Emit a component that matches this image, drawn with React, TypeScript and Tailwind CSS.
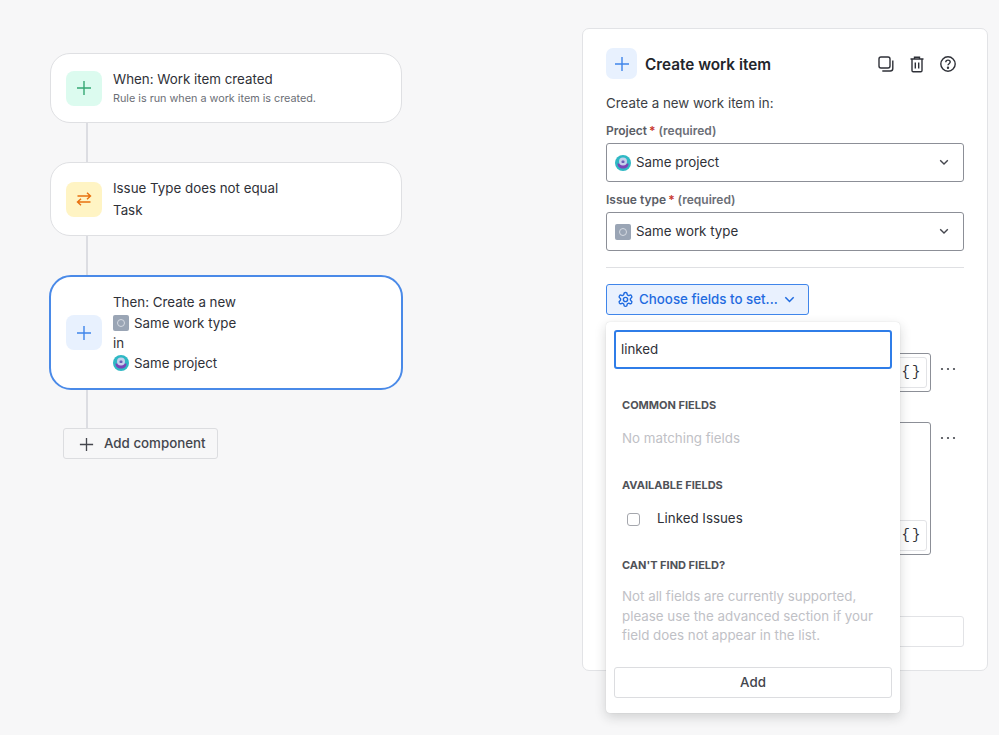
import React from "react";

const Plus = ({ c, s = 18 }: { c: string; s?: number }) => (
  <svg width={s} height={s} viewBox="0 0 18 18" fill="none" stroke={c} strokeWidth="1.4">
    <path d="M9 2v14M2 9h14" />
  </svg>
);

const ProjectIcon = () => (
  <svg width="16" height="16" viewBox="0 0 16 16" className="shrink-0">
    <circle cx="8" cy="8" r="8" fill="#2fb8c4" />
    <path d="M2.500 8.500h11c0 3.200-2.200 5-5.500 5s-5.500-1.800-5.500-5z" fill="#7a45b8" />
    <circle cx="8" cy="6.500" r="4" fill="#c5d0ec" />
    <rect x="6.600" y="5.600" width="2.800" height="2.400" rx="0.600" fill="#6a5fb8" />
  </svg>
);

const TypeIcon = () => (
  <span className="w-4 h-4 shrink-0 rounded-[2px] bg-[#9aa5b5] flex items-center justify-center">
    <span className="w-[8px] h-[8px] rounded-full border border-[#d5dae2]" />
  </span>
);

const Chevron = ({ c = "#44464d", w = 10 }: { c?: string; w?: number }) => (
  <svg width={w} height={(w * 7) / 10} viewBox="0 0 10 7" fill="none" stroke={c} strokeWidth="1.4">
    <path d="M1.200 1.200 5 5l3.800-3.800" />
  </svg>
);

const Connector = ({ h }: { h: string }) => <div className={`ml-[36px] w-[2px] bg-[#dcdde2] ${h}`} />;

const Select = ({ icon, text }: { icon: React.ReactNode; text: string }) => (
  <div className="h-[39px] border border-[#8c8f97] rounded-[3px] bg-white flex items-center pl-[8px] pr-[14px] gap-[5px] text-[13.330px] text-[#2f3138]">
    {icon}
    <span className="flex-1">{text}</span>
    <Chevron />
  </div>
);

const Label = ({ text }: { text: string }) => (
  <div className="flex text-[12px] leading-[16px] font-semibold text-[#5a5d66]">
    <span>{text}</span>
    <span className="ml-[2px] text-[#c9372c]">*</span>
    <span className="ml-[3px] text-[#6b6e76]">(required)</span>
  </div>
);

const Heading = ({ text }: { text: string }) => (
  <div className="text-[11px] leading-[16px] font-bold text-[#505258]">{text}</div>
);

const Braces = () => (
  <div className="w-[32px] h-[31px] border border-[#e2e3e6] rounded-[3px] bg-white flex items-center justify-center text-[14px] tracking-[2px] pl-[2px] text-[#2f3138] font-['Liberation_Mono',monospace]">
    {"{}"}
  </div>
);

const Dots = () => (
  <svg width="16" height="4" viewBox="0 0 16 4" fill="#44464d">
    <circle cx="2" cy="2" r="1.100" />
    <circle cx="8" cy="2" r="1.100" />
    <circle cx="14" cy="2" r="1.100" />
  </svg>
);

export default function App() {
  return (
    <div className="relative w-[999px] h-[735px] overflow-hidden bg-[#f7f7f8] flex items-start font-['Inter',sans-serif]">
      <div className="w-[352px] ml-[50px] mt-[53px] flex flex-col shrink-0">
        <div className="h-[70px] rounded-[20px] border border-[#dfe0e3] bg-white flex items-center pl-[15px] gap-[11px]">
          <div className="w-[36px] h-[35px] rounded-[8px] bg-[#dcfbef] flex items-center justify-center">
            <Plus c="#35a874" />
          </div>
          <div className="-mt-[1px]">
            <div className="text-[13.330px] leading-[20px] text-[#2f3138]">When: Work item created</div>
            <div className="text-[10.800px] leading-[16px] text-[#6b6e76] mt-[2px]">Rule is run when a work item is created.</div>
          </div>
        </div>
        <Connector h="h-[40px]" />
        <div className="h-[74px] -mt-px rounded-[20px] border border-[#dfe0e3] bg-white flex items-center pl-[15px] gap-[11px]">
          <div className="w-[36px] h-[35px] rounded-[8px] bg-[#fff4c4] flex items-center justify-center">
            <svg width="16" height="16" viewBox="0 0 16 16" fill="none" stroke="#e8700f" strokeWidth="1.400">
              <path d="M1.500 5h13M11 1.800 14.500 5 11 8.200M14.500 11h-13M5 7.800 1.500 11 5 14.200" />
            </svg>
          </div>
          <div className="text-[13.330px] leading-[21.500px] pt-[1px] text-[#2f3138]">
            <div>Issue Type does not equal</div>
            <div>Task</div>
          </div>
        </div>
        <Connector h="h-[39px]" />
        <div className="h-[115px] -mx-px rounded-[22px] border-2 border-[#4a8ae8] bg-white flex items-center pl-[15px] gap-[11px]">
          <div className="w-[36px] h-[35px] rounded-[8px] bg-[#e8f1fe] flex items-center justify-center">
            <Plus c="#3f85ea" />
          </div>
          <div className="text-[13.330px] text-[#2f3138] leading-[20px] flex flex-col">
            <div>Then: Create a new</div>
            <div className="flex items-center gap-[5px] mt-[1px]"><TypeIcon />Same work type</div>
            <div>in</div>
            <div className="flex items-center gap-[5px]"><ProjectIcon />Same project</div>
          </div>
        </div>
        <Connector h="h-[38px]" />
        <div className="ml-[13px] w-[155px] h-[31px] pt-[1px] rounded-[3px] border border-[#dcdde0] bg-[#f7f7f8] flex items-center pl-[14px] gap-[9px] text-[13.330px] font-medium text-[#44464d]">
          <Plus c="#44464d" s={17} />
          Add component
        </div>
      </div>

      <div className="ml-[180px] mt-[28px] w-[406px] h-[643px] shrink-0 rounded-[7px] border border-[#e2e3e6] bg-white pt-[19px] px-[23px]">
        <div className="flex items-center h-[31px]">
          <div className="w-[31px] h-[31px] rounded-[7px] bg-[#e8f1fe] flex items-center justify-center">
            <Plus c="#3f85ea" />
          </div>
          <div className="ml-[8px] flex-1 pt-[3px] text-[15.300px] font-semibold text-[#23252b]">Create work item</div>
          <div className="flex items-center gap-[14px] mr-[7px] text-[#2f3138]">
            <svg width="18" height="18" viewBox="0 0 18 18" fill="none" stroke="currentColor" strokeWidth="1.400">
              <rect x="2" y="2" width="11" height="11" rx="2" />
              <path d="M15.800 5.500v8a2.500 2.500 0 0 1-2.500 2.500h-8" />
            </svg>
            <svg width="16" height="18" viewBox="0 0 16 18" fill="none" stroke="currentColor" strokeWidth="1.400">
              <path d="M1.500 4h13M5.500 4V2.200h5V4M3 4v11.500a1.200 1.200 0 0 0 1.200 1.200h7.600a1.200 1.200 0 0 0 1.200-1.200V4M6.300 7.500v6M9.700 7.500v6" />
            </svg>
            <svg width="18" height="18" viewBox="0 0 18 18" fill="none" stroke="currentColor" strokeWidth="1.400">
              <circle cx="9" cy="9" r="7.200" />
              <path d="M6.800 7.200c0-1.300 1-2.100 2.200-2.100s2.200.8 2.200 2c0 1.600-2.200 1.600-2.200 3.200" />
              <circle cx="9" cy="12.800" r="0.500" fill="currentColor" />
            </svg>
          </div>
        </div>
        <div className="mt-[14px] text-[13.330px] leading-[20px] text-[#3d3f46]">Create a new work item in:</div>
        <div className="mt-[10px]"><Label text="Project" /></div>
        <div className="mt-[4px]"><Select icon={<ProjectIcon />} text="Same project" /></div>
        <div className="mt-[10px]"><Label text="Issue type" /></div>
        <div className="mt-[4px]"><Select icon={<TypeIcon />} text="Same work type" /></div>
        <div className="mt-[16px] h-px bg-[#dfe0e3]" />
        <div className="mt-[16px] w-[203px] h-[31px] rounded-[3px] border border-[#3f85ea] bg-[#e9f1fe] flex items-center pl-[10px] gap-[5px] text-[13.330px] font-medium text-[#1f6be0]">
          <svg width="17" height="17" viewBox="0 0 24 24" fill="none" stroke="currentColor" strokeWidth="2">
            <path d="M12.200 2h-.4a2 2 0 0 0-2 2v.2a2 2 0 0 1-1 1.700l-.4.200a2 2 0 0 1-2 0l-.2-.1a2 2 0 0 0-2.700.7l-.2.4a2 2 0 0 0 .7 2.700l.2.1a2 2 0 0 1 1 1.700v.5a2 2 0 0 1-1 1.700l-.2.1a2 2 0 0 0-.7 2.700l.2.4a2 2 0 0 0 2.700.7l.2-.1a2 2 0 0 1 2 0l.4.2a2 2 0 0 1 1 1.700v.2a2 2 0 0 0 2 2h.4a2 2 0 0 0 2-2v-.2a2 2 0 0 1 1-1.700l.4-.2a2 2 0 0 1 2 0l.2.1a2 2 0 0 0 2.700-.7l.2-.4a2 2 0 0 0-.7-2.700l-.2-.1a2 2 0 0 1-1-1.700v-.5a2 2 0 0 1 1-1.700l.2-.1a2 2 0 0 0 .7-2.700l-.2-.4a2 2 0 0 0-2.700-.7l-.2.1a2 2 0 0 1-2 0l-.4-.2a2 2 0 0 1-1-1.700V4a2 2 0 0 0-2-2z" />
            <circle cx="12" cy="12" r="3" />
          </svg>
          <span>Choose fields to set...</span>
          <span className="ml-[1px]"><Chevron c="#1f6be0" w={11} /></span>
        </div>

        <div className="mt-[38px] flex items-start">
          <div className="w-[325px] h-[39px] border border-[#8c8f97] rounded-[3px] flex items-center justify-end pr-[3px]"><Braces /></div>
          <div className="ml-[9px] mt-[14px]"><Dots /></div>
        </div>
        <div className="mt-[30px] flex items-start">
          <div className="w-[325px] h-[133px] border border-[#8c8f97] rounded-[3px] flex items-end justify-end pr-[3px] pb-[3px]"><Braces /></div>
          <div className="ml-[9px] mt-[14px]"><Dots /></div>
        </div>
        <div className="mt-[61px] h-[31px] border border-[#e2e3e6] rounded-[3px]" />
      </div>

      <div className="absolute left-[606px] top-[322px] w-[294px] h-[391px] bg-white rounded-[4px] shadow-[0_4px_12px_rgba(30,31,33,0.18),0_0_1px_rgba(30,31,33,0.2)] px-[8px] pt-[8px]">
        <div className="h-[39px] pt-[1px] rounded-[3px] border-2 border-[#2f7de8] flex items-center pl-[5px] text-[13.330px] text-[#2f3138]">linked</div>
        <div className="pl-[8px] pr-[6px]">
          <div className="mt-[28px]"><Heading text="COMMON FIELDS" /></div>
          <div className="mt-[15px] text-[13.330px] leading-[20px] text-[#bfc1c6]">No matching fields</div>
          <div className="mt-[29px]"><Heading text="AVAILABLE FIELDS" /></div>
          <div className="mt-[16px] flex items-center h-[20px] text-[13.330px] text-[#2f3138]">
            <span className="ml-[5px] w-[13px] h-[13px] rounded-[3px] border border-[#a5a7ad]" />
            <span className="ml-[17px]">Linked Issues</span>
          </div>
          <div className="mt-[28px]"><Heading text="CAN'T FIND FIELD?" /></div>
          <div className="mt-[14px] text-[13.330px] leading-[19.500px] text-[#bfc1c6]">
            Not all fields are currently supported, please use the advanced section if your field does not appear in the list.
          </div>
        </div>
        <div className="mt-[21px] h-[31px] pt-[1px] rounded-[3px] border border-[#dcdde0] flex items-center justify-center text-[13.330px] font-medium text-[#44464d]">Add</div>
      </div>
    </div>
  );
}
